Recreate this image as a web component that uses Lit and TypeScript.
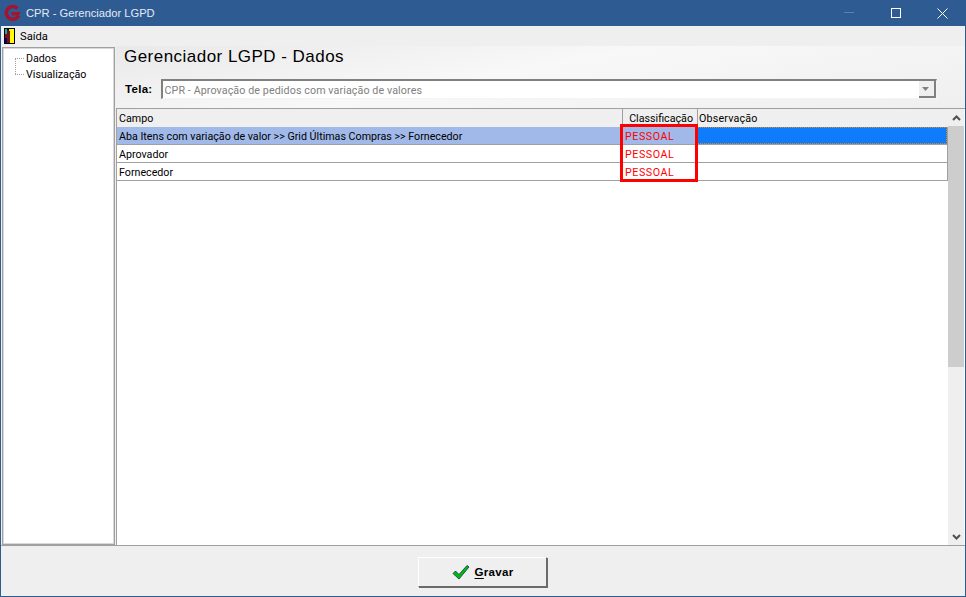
import { LitElement, html, css } from "lit";
import { customElement } from "lit/decorators.js";

const rows = [
  "Aba Itens com variação de valor >> Grid Últimas Compras >> Fornecedor",
  "Aprovador",
  "Fornecedor",
];

@customElement("app-root")
export class AppRoot extends LitElement {
  static styles = css`
    :host {
      display: block;
      width: 966px;
      height: 597px;
      font-family: Roboto, "Liberation Sans", Arial, sans-serif;
      font-size: 10.7px;
      color: #000;
    }

    .window {
      box-sizing: border-box;
      width: 966px;
      height: 597px;
      display: flex;
      flex-direction: column;
      background: #efefef;
      border: 1px solid #2f5b93;
      border-top: none;
    }

    .titlebar {
      height: 26px;
      flex: none;
      display: flex;
      align-items: center;
      background: #2f5b93;
      color: #e4eaf3;
      font-family: "Liberation Sans", Arial, sans-serif;
      font-size: 11.2px;
    }

    .titlebar .logo {
      margin: 0 5px 0 3px;
    }

    .titlebar .caption {
      flex: 1;
    }

    .winbtn {
      width: 46px;
      height: 26px;
      display: flex;
      align-items: center;
      justify-content: center;
    }

    .menu {
      height: 20px;
      flex: none;
      display: flex;
      align-items: center;
      gap: 5px;
      padding-left: 3px;
      font-size: 11.2px;
    }

    .body {
      flex: 1;
      min-height: 0;
      display: flex;
    }

    .tree {
      box-sizing: border-box;
      width: 113px;
      margin: 1px 0 0 1px;
      background: #fff;
      border: 1px solid #a0a0a0;
      outline: 1px solid #d8d8d8;
      outline-offset: -2px;
      padding: 3px 0 0 23px;
      line-height: 16px;
    }

    .tree .node {
      position: relative;
    }

    .tree .node::before {
      content: "";
      position: absolute;
      left: -11px;
      top: 7px;
      width: 9px;
      border-top: 1px dotted #a0a0a0;
    }

    .tree .node + .node::after {
      content: "";
      position: absolute;
      left: -11px;
      top: -8px;
      height: 15px;
      border-left: 1px dotted #a0a0a0;
    }

    .main {
      flex: 1;
      min-width: 0;
      margin-left: 1px;
      display: flex;
      flex-direction: column;
    }

    .head {
      height: 62px;
      flex: none;
      box-sizing: border-box;
      padding: 1px 0 0 8px;
      background: linear-gradient(170deg, #e9e9e9 0%, #f8f8f8 45%, #efefef 100%);
    }

    h1 {
      margin: 0;
      font-family: "Liberation Sans", Arial, sans-serif;
      font-size: 17px;
      font-weight: 400;
      line-height: 20px;
      letter-spacing: 0.47px;
    }

    .field {
      margin-top: 12px;
      display: flex;
      align-items: center;
      gap: 8px;
    }

    .field label {
      margin-left: 1px;
      font-family: "Liberation Sans", Arial, sans-serif;
      font-weight: 700;
      font-size: 11.5px;
      letter-spacing: 0.3px;
    }

    .select {
      box-sizing: border-box;
      width: 776px;
      height: 20px;
      display: flex;
      align-items: center;
      background: #fff;
      border: 1px solid #f4f4f4;
      border-top: 2px solid #808080;
      border-left: 2px solid #808080;
      color: #808080;
      padding-left: 2px;
    }

    .select span {
      flex: 1;
      padding-top: 2px;
      letter-spacing: 0.1px;
    }

    .select .drop {
      width: 17px;
      height: 17px;
      display: flex;
      align-items: center;
      justify-content: center;
      background: #efefef;
      border-right: 2px solid #808080;
      border-bottom: 2px solid #808080;
      box-sizing: border-box;
    }

    .gridwrap {
      flex: 1;
      min-height: 0;
      display: flex;
      position: relative;
      background: #fff;
      border-left: 1px solid #a0a0a0;
      border-top: 1px solid #a0a0a0;
    }

    .grid {
      flex: 1;
      min-width: 0;
    }

    .row {
      display: grid;
      grid-template-columns: 505px 75px 1fr;
      height: 18px;
      box-sizing: border-box;
      border-bottom: 1px solid #a0a0a0;
      line-height: 19px;
      border-right: 1px solid #a0a0a0;
    }

    .row > div {
      padding-left: 2px;
      overflow: hidden;
      white-space: nowrap;
    }

    .row .cls {
      color: #f00;
      padding-left: 3px;
      letter-spacing: 0.55px;
    }

    .row.header {
      height: 18px;
      background: #efefef;
      border-bottom: none;
      border-right: none;
      line-height: 20px;
    }

    .row.header > div + div {
      border-left: 1px solid #a0a0a0;
    }

    .row.header .center {
      text-align: right;
      padding-right: 4px;
    }

    .row.header .obs {
      padding-left: 1px;
      letter-spacing: 0.2px;
    }

    .row.selected {
      background: #a0b9e9;
    }

    .row.selected .focus {
      background: #0f7cfb;
      outline: 1px dotted #e08a1e;
      outline-offset: -1px;
    }

    .scroll {
      width: 16px;
      flex: none;
      display: flex;
      flex-direction: column;
      background: #efefef;
      margin-right: 1px;
    }

    .scroll .arrow {
      height: 17px;
      flex: none;
      display: flex;
      align-items: center;
      justify-content: center;
    }

    .scroll .thumb {
      height: 241px;
      flex: none;
      background: #cdcdcd;
    }

    .scroll .track {
      flex: 1;
    }

    .mark {
      position: absolute;
      left: 503px;
      top: 15px;
      width: 78px;
      height: 58px;
      box-sizing: border-box;
      border: 3px solid #f00;
      pointer-events: none;
    }

    .footer {
      height: 51px;
      flex: none;
      display: flex;
      align-items: flex-start;
      justify-content: center;
      border-top: 1px solid #a0a0a0;
      box-sizing: border-box;
      padding-top: 11px;
    }

    button {
      box-sizing: border-box;
      width: 129px;
      height: 30px;
      margin-left: -1px;
      display: flex;
      align-items: center;
      justify-content: center;
      gap: 5px;
      background: #efefef;
      border: 1px solid;
      border-color: #fff #6a6a6a #6a6a6a #fff;
      box-shadow: 1px 1px 0 #6a6a6a;
      font: 700 11.5px "Liberation Sans", Arial, sans-serif;
      letter-spacing: 0.3px;
      padding: 0;
    }

    u {
      text-underline-offset: 2px;
    }
  `;

  render() {
    return html`
      <div class="window">
        <div class="titlebar">
          <svg class="logo" width="17" height="17" viewBox="0 0 17 17">
            <path d="M13.5 3.6A6.4 6.4 0 1 0 14.6 10.5" fill="none" stroke="#a3142f" stroke-width="3.6" />
            <path d="M7 7H16.5L15 10.4H8Z" fill="#a3142f" />
          </svg>
          <span class="caption">CPR - Gerenciador LGPD</span>
          <div class="winbtn">
            <svg width="12" height="2"><rect width="10" height="1" fill="#5f80ab" /></svg>
          </div>
          <div class="winbtn">
            <svg width="10" height="10"><rect x=".5" y=".5" width="9" height="9" fill="none" stroke="#fff" /></svg>
          </div>
          <div class="winbtn">
            <svg width="11" height="11"><path d="M.5 .5L10.5 10.5M10.5 .5L.5 10.5" stroke="#fff" /></svg>
          </div>
        </div>
        <div class="menu">
          <svg width="11" height="16" viewBox="0 0 11 16">
            <rect width="11" height="16" fill="#000" />
            <rect x="5" y="1" width="5" height="14" fill="#ff0" />
            <path d="M1 1L6 3V15H1Z" fill="#7a1010" />
            <rect x="1" y="1" width="2" height="5" fill="#10a8c8" />
            <rect x="1" y="10" width="2" height="5" fill="#000080" />
          </svg>
          <span>Saída</span>
        </div>
        <div class="body">
          <div class="tree">
            <div class="node">Dados</div>
            <div class="node">Visualização</div>
          </div>
          <div class="main">
            <div class="head">
              <h1>Gerenciador LGPD - Dados</h1>
              <div class="field">
                <label>Tela:</label>
                <div class="select">
                  <span>CPR - Aprovação de pedidos com variação de valores</span>
                  <div class="drop">
                    <svg width="8" height="4"><path d="M0 0H7L3.5 4Z" fill="#808080" /></svg>
                  </div>
                </div>
              </div>
            </div>
            <div class="gridwrap">
              <div class="grid">
                <div class="row header">
                  <div>Campo</div>
                  <div class="center">Classificação</div>
                  <div class="obs">Observação</div>
                </div>
                ${rows.map(
                  (r, i) => html`
                    <div class="row ${i === 0 ? "selected" : ""}">
                      <div>${r}</div>
                      <div class="cls">PESSOAL</div>
                      <div class="focus"></div>
                    </div>
                  `,
                )}
              </div>
              <div class="scroll">
                <div class="arrow">
                  <svg width="9" height="6"><path d="M1 5L4.5 1.5L8 5" fill="none" stroke="#505050" stroke-width="2" /></svg>
                </div>
                <div class="thumb"></div>
                <div class="track"></div>
                <div class="arrow">
                  <svg width="9" height="6"><path d="M1 1L4.5 4.5L8 1" fill="none" stroke="#505050" stroke-width="2" /></svg>
                </div>
              </div>
              <div class="mark"></div>
            </div>
          </div>
        </div>
        <div class="footer">
          <button>
            <svg width="18" height="16" viewBox="0 0 18 16">
              <path d="M1 9.5L3.5 7L7 10.5L15 1.5L17 3L7 15Z" fill="#00c000" stroke="#062a6a" stroke-width="0.8" />
            </svg>
            <span><u>G</u>ravar</span>
          </button>
        </div>
      </div>
    `;
  }
}
